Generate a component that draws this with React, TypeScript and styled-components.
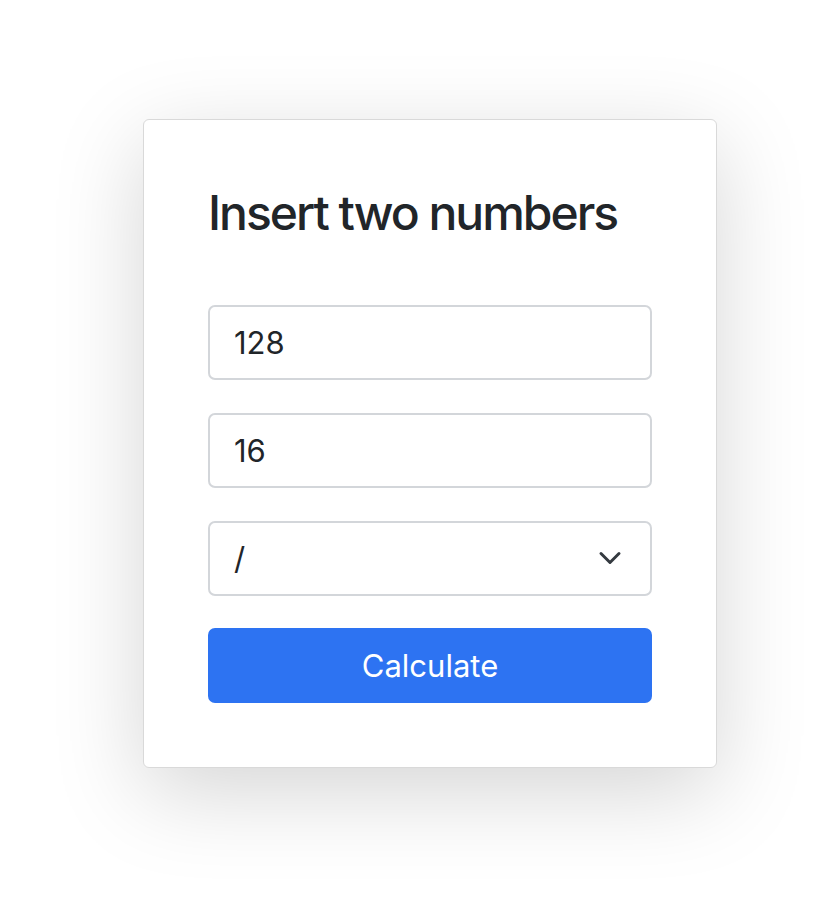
import React, { FC, useState } from 'react';
import styled, { createGlobalStyle } from 'styled-components';

// === global ===
const GlobalStyle = createGlobalStyle`
  html, body {
    margin: 0;
    padding: 0;
    background: #ffffff;
  }
  body {
    font-family: Inter, "Noto Sans", "Liberation Sans", sans-serif;
    color: #212529;
  }
`;

const chevron =
  "url(\"data:image/svg+xml,%3csvg xmlns='http://www.w3.org/2000/svg' viewBox='0 0 16 16'%3e%3cpath fill='none' stroke='%23343a40' stroke-linecap='round' stroke-linejoin='round' stroke-width='2' d='m2 5 6 6 6-6'/%3e%3c/svg%3e\")";

// === component ===
const App: FC = () => {
  const [first, setFirst] = useState('128');
  const [second, setSecond] = useState('16');
  const [op, setOp] = useState('/');

  return (
    <>
      <GlobalStyle />
      <Page>
        <Card onSubmit={(e) => e.preventDefault()}>
          <Title>Insert two numbers</Title>
          <Field
            type="text"
            value={first}
            onChange={(e) => setFirst(e.currentTarget.value)}
          />
          <Field
            type="text"
            value={second}
            onChange={(e) => setSecond(e.currentTarget.value)}
          />
          <Select value={op} onChange={(e) => setOp(e.currentTarget.value)}>
            <option value="+">+</option>
            <option value="-">-</option>
            <option value="*">*</option>
            <option value="/">/</option>
          </Select>
          <Button type="submit">Calculate</Button>
        </Card>
      </Page>
    </>
  );
};

// === style ===
const Page = styled.div`
  min-height: 914px;
  padding: 119px 0 0 143px;
  box-sizing: border-box;
`;

const Card = styled.form`
  width: 574px;
  box-sizing: border-box;
  padding: 64px 64px 64px;
  background: #fff;
  border: 1px solid #d9d9d9;
  border-radius: 6px;
  box-shadow: 0 24px 90px rgba(0, 0, 0, 0.17);
  display: flex;
  flex-direction: column;
`;

const Title = styled.h3`
  margin: 0 0 63px;
  font-size: 48px;
  font-weight: 500;
  line-height: 1.2;
  letter-spacing: -2px;
  color: #212529;
`;

const Field = styled.input`
  height: 75px;
  box-sizing: border-box;
  margin-bottom: 33px;
  padding: 0 24px;
  font-family: inherit;
  font-size: 31px;
  color: #212529;
  background: #fff;
  border: 2px solid #d3d6da;
  border-radius: 7px;
  outline: none;
`;

const Select = styled.select`
  height: 75px;
  box-sizing: border-box;
  margin-bottom: 32px;
  padding: 0 70px 0 24px;
  font-family: inherit;
  font-size: 31px;
  color: #212529;
  background-color: #fff;
  background-image: ${chevron};
  background-repeat: no-repeat;
  background-position: right 24px center;
  background-size: 32px 24px;
  border: 2px solid #d3d6da;
  border-radius: 7px;
  appearance: none;
  outline: none;
`;

const Button = styled.button`
  height: 75px;
  font-family: inherit;
  font-size: 31px;
  color: #fff;
  background: #2d73f2;
  border: none;
  border-radius: 7px;
  cursor: pointer;
`;

export default App;
